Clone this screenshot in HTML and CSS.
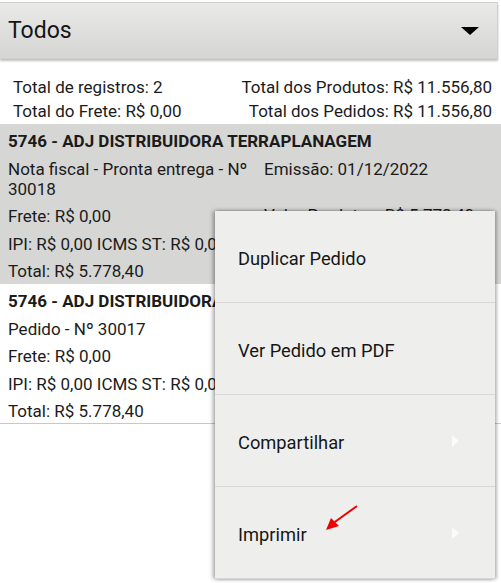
FILE: index.html
```html
<!DOCTYPE html>
<html>
<head>
<meta charset="utf-8">
<title>Pedidos</title>
<link rel="stylesheet" href="styles.css">
</head>
<body>
	<div class="page">
		<div class="filter">
			<span class="filter-label">Todos</span>
			<span class="filter-caret"></span>
		</div>

		<div class="summary">
			<span>Total de registros: 2</span>
			<span class="right">Total dos Produtos: R$ 11.556,80</span>
			<span>Total do Frete: R$ 0,00</span>
			<span class="right">Total dos Pedidos: R$ 11.556,80</span>
		</div>

		<ul class="order-list">
			<li class="order selected">
				<div class="title">5746 - ADJ DISTRIBUIDORA TERRAPLANAGEM</div>
				<div class="row">
					<span class="col-left">Nota fiscal - Pronta entrega - Nº 30018</span>
					<span class="col-right">Emissão: 01/12/2022</span>
				</div>
				<div class="row">
					<span class="col-left">Frete: R$ 0,00</span>
					<span class="col-right raised">Valor Produtos: R$ 5.778,40</span>
				</div>
				<div class="line">IPI: R$ 0,00 ICMS ST: R$ 0,00</div>
				<div class="line">Total: R$ 5.778,40</div>
			</li>
			<li class="order">
				<div class="title">5746 - ADJ DISTRIBUIDORA TERRAPLANAGEM</div>
				<div class="row">
					<span class="col-left">Pedido - Nº 30017</span>
				</div>
				<div class="row">
					<span class="col-left">Frete: R$ 0,00</span>
				</div>
				<div class="line">IPI: R$ 0,00 ICMS ST: R$ 0,00</div>
				<div class="line">Total: R$ 5.778,40</div>
			</li>
		</ul>

		<ul class="context-menu">
			<li>Duplicar Pedido</li>
			<li>Ver Pedido em PDF</li>
			<li class="has-sub">Compartilhar <span class="sub-arrow"></span></li>
			<li class="has-sub">Imprimir <span class="sub-arrow"></span>
				<svg class="pointer" width="40" height="30" viewBox="0 0 40 30">
					<line x1="37" y1="2" x2="12" y2="20" stroke="#f00000" stroke-width="2"/>
					<polygon points="6,26 11,14 19,22" fill="#f00000"/>
				</svg>
			</li>
		</ul>
	</div>
</body>
</html>
```

FILE: styles.css
```css
*{
	padding: 0;
	margin: 0;
	box-sizing: border-box;
}
body{
	font-family: Roboto, "Liberation Sans", sans-serif;
	color: #1b1b1b;
	background: #fff;
}
.page{
	position: relative;
	width: 501px;
	height: 583px;
	overflow: hidden;
}
.filter{
	display: flex;
	align-items: center;
	justify-content: space-between;
	height: 57px;
	margin: 2px 3px 0 0;
	padding: 0 18px 0 8px;
	background: linear-gradient(#e9eae8, #d5d6d4);
	border: 1px solid #d0d0ce;
	border-left: none;
	box-shadow: 0 2px 2px rgba(0,0,0,0.25);
}
.filter-label{
	font-size: 23px;
	color: #151515;
}
.filter-caret{
	width: 0; height: 0;
	border-left: 9px solid transparent;
	border-right: 9px solid transparent;
	border-top: 8px solid #000;
}
.summary{
	display: grid;
	grid-template-columns: 1fr auto;
	padding: 16px 9px 1px 13px;
	font-size: 17px;
	line-height: 24px;
}
.summary .right{
	text-align: right;
}
.order-list{
	list-style: none;
}
.order{
	display: flex;
	flex-direction: column;
	gap: 7.5px;
	padding: 7px 0 3px 8px;
	font-size: 17px;
	line-height: 20px;
	white-space: nowrap;
}
.order.selected{
	background: #d6d6d5;
}
.order + .order{
	padding-bottom: 2px;
	border-bottom: 1px solid #c8c8c8;
}
.order .title{
	font-weight: bold;
	font-size: 17px;
}
.order .row{
	display: flex;
}
.order .col-left{
	width: 256px;
	padding-right: 4px;
	white-space: normal;
}
.order .col-right{
	flex: 1;
}
.order .raised{
	margin-top: -1px;
}
.context-menu{
	list-style: none;
	position: absolute;
	left: 215px;
	top: 211px;
	width: 280px;
	background: #eeefed;
	box-shadow: -2px 0 4px rgba(0,0,0,0.35), 2px 0 3px rgba(0,0,0,0.25);
}
.context-menu li{
	position: relative;
	display: flex;
	align-items: center;
	height: 92px;
	padding: 4px 0 0 23px;
	font-size: 18.3px;
	color: #161616;
	border-bottom: 1px solid #d8d9d7;
}
.sub-arrow{
	position: absolute;
	left: 237px;
	top: 40px;
	width: 0; height: 0;
	border-top: 6px solid transparent;
	border-bottom: 6px solid transparent;
	border-left: 7px solid #fbfbfb;
}
.pointer{
	position: absolute;
	left: 105px;
	top: 17px;
}
```
